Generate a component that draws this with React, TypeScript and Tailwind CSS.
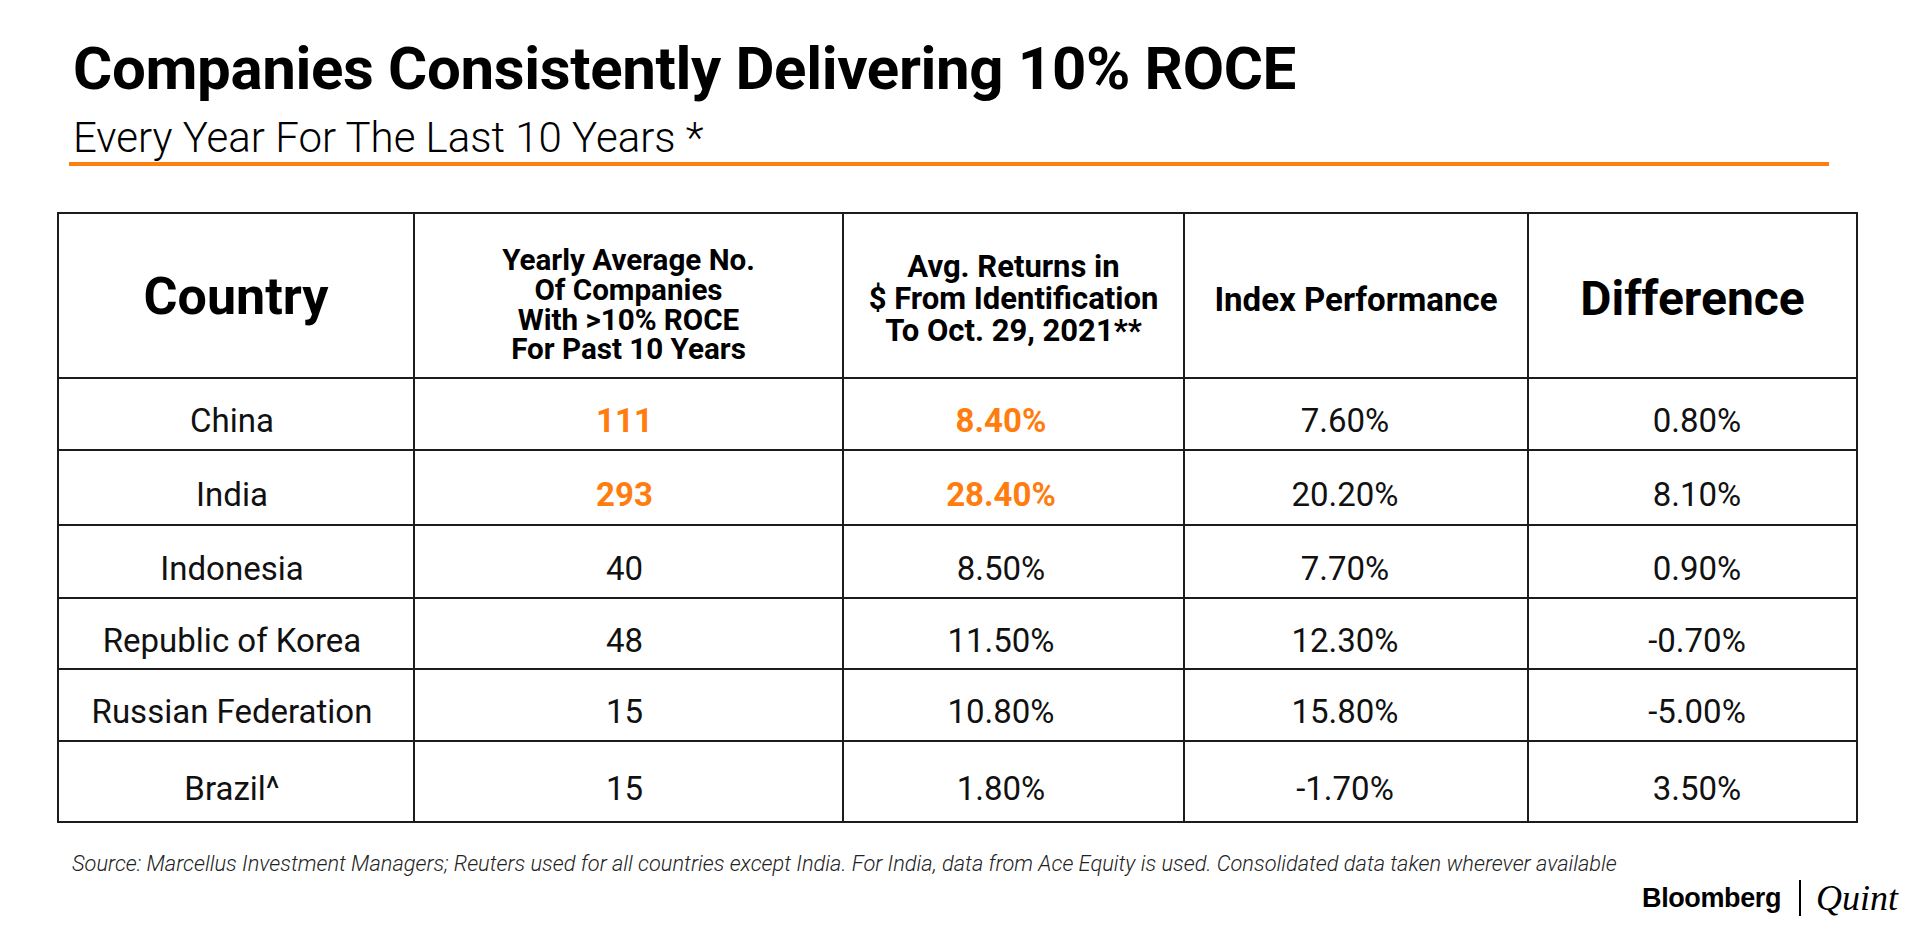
import type { ReactNode } from 'react';

interface Row {
  country: string;
  companies: string;
  avgReturn: string;
  index: string;
  diff: string;
  highlight?: boolean;
  height: string;
}

const rows: Row[] = [
  { country: 'China', companies: '111', avgReturn: '8.40%', index: '7.60%', diff: '0.80%', highlight: true, height: 'h-[72px]' },
  { country: 'India', companies: '293', avgReturn: '28.40%', index: '20.20%', diff: '8.10%', highlight: true, height: 'h-[75px]' },
  { country: 'Indonesia', companies: '40', avgReturn: '8.50%', index: '7.70%', diff: '0.90%', height: 'h-[73px]' },
  { country: 'Republic of Korea', companies: '48', avgReturn: '11.50%', index: '12.30%', diff: '-0.70%', height: 'h-[71px]' },
  { country: 'Russian Federation', companies: '15', avgReturn: '10.80%', index: '15.80%', diff: '-5.00%', height: 'h-[72px]' },
  { country: 'Brazil^', companies: '15', avgReturn: '1.80%', index: '-1.70%', diff: '3.50%', height: 'h-[81px]' },
];

// base styles shared by every cell
const cellBase = 'border-2 border-[#1c1c1c] text-center align-middle';

function Cell({ children, orange, shift }: { children: ReactNode; orange?: boolean; shift: string }) {
  return (
    <td
      className={`${cellBase} ${shift} pt-[14px] text-[33px] ${
        orange ? 'font-bold text-[#ff7d0f]' : 'font-normal text-[#111]'
      }`}
    >
      {children}
    </td>
  );
}

export default function App() {
  return (
    <div className="w-[1920px] h-[932px] bg-white overflow-hidden font-['Roboto',sans-serif] text-black">
      <div className="pl-[73px] pt-[39px]">
        <h1 className="text-[60px] leading-[60px] font-bold tracking-[-0.35px]">
          Companies Consistently Delivering 10% ROCE
        </h1>
        <p className="mt-[18px] text-[42px] leading-[41px] font-light">
          Every Year For The Last 10 Years *
        </p>
      </div>
      <div className="ml-[69px] mt-[4px] w-[1760px] h-[4px] bg-[#ff7f0e]" />

      <div className="ml-[57px] mt-[46px] w-[1799px]">
        <table className="w-full border-collapse table-fixed">
          <colgroup>
            <col className="w-[356px]" />
            <col className="w-[429px]" />
            <col className="w-[341px]" />
            <col className="w-[344px]" />
            <col className="w-[329px]" />
          </colgroup>
          <thead>
            <tr className="h-[165px]">
              <th className={`${cellBase} pt-[2px] font-bold text-[52px] leading-none`}>Country</th>
              <th className={`${cellBase} pt-[20px] font-bold text-[29.6px] leading-[29.6px]`}>
                Yearly Average No.
                <br />
                Of Companies
                <br />
                With &gt;10% ROCE
                <br />
                For Past 10 Years
              </th>
              <th className={`${cellBase} pt-[7px] font-bold text-[31px] leading-[32px]`}>
                Avg. Returns in
                <br />$ From Identification
                <br />
                To Oct. 29, 2021**
              </th>
              <th className={`${cellBase} pt-[7px] font-bold text-[33px] leading-none`}>Index Performance</th>
              <th className={`${cellBase} pt-[7px] font-bold text-[48px] leading-none`}>Difference</th>
            </tr>
          </thead>
          <tbody>
            {rows.map((r) => (
              <tr key={r.country} className={r.height}>
                <Cell shift="pr-[8px]">{r.country}</Cell>
                <Cell shift="pr-[8px]" orange={r.highlight}>
                  {r.companies}
                </Cell>
                <Cell shift="pr-[25px]" orange={r.highlight}>
                  {r.avgReturn}
                </Cell>
                <Cell shift="pr-[22px]">{r.index}</Cell>
                <Cell shift="pl-[9px]">{r.diff}</Cell>
              </tr>
            ))}
          </tbody>
        </table>
      </div>

      <p className="ml-[72px] mt-[30px] text-[21.8px] leading-[22px] font-light italic text-[#222]">
        Source: Marcellus Investment Managers; Reuters used for all countries except India. For India, data from Ace Equity is used. Consolidated data taken wherever available
      </p>

      <div className="flex items-center justify-end pr-[22px] mt-[5px]">
        <span className="font-['Liberation_Sans',Arial,sans-serif] font-bold text-[27px] leading-none tracking-[-0.4px] text-black">
          Bloomberg
        </span>
        <span className="ml-[18px] mr-[15px] w-[2px] h-[36px] bg-black" />
        <span className="font-['Liberation_Serif','Times_New_Roman',serif] italic text-[36px] leading-none text-black">
          Quint
        </span>
      </div>
    </div>
  );
}
